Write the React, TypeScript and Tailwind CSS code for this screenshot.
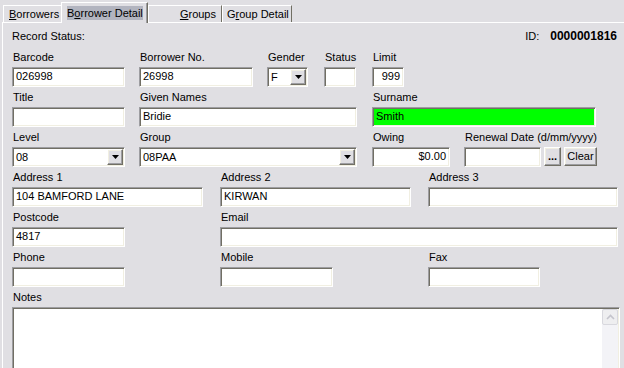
import { ReactNode } from "react";

const sunken =
  "border border-t-[#9d9da1] border-l-[#9d9da1] border-b-white border-r-white shadow-[inset_1px_1px_0_#716f64,inset_-1px_-1px_0_#f1efe2]";
const raised =
  "border border-t-white border-l-white border-b-[#716f64] border-r-[#716f64] shadow-[inset_-1px_-1px_0_#9d9da1,inset_1px_1px_0_#f1efe2]";

const Field = ({ label, className = "", children }: { label: string; className?: string; children: ReactNode }) => (
  <div className={className}>
    <div className="mb-[3px] h-[13px] whitespace-nowrap pl-[1px] leading-[13px]">{label}</div>
    {children}
  </div>
);

const TextBox = ({ value = "", className = "" }: { value?: string; className?: string }) => (
  <div className={`h-[20px] overflow-hidden whitespace-nowrap px-[3px] leading-[17px] ${sunken} ${className || "bg-white"}`}>
    {value}
  </div>
);

const DropDown = ({ value }: { value: string }) => (
  <div className={`flex h-[20px] items-center bg-white pl-[3px] pr-[1px] ${sunken}`}>
    <span className="flex-1 leading-[17px]">{value}</span>
    <div className={`flex h-[16px] w-[16px] items-center justify-center bg-[#e0dfe3] ${raised}`}>
      <svg width="7" height="4" viewBox="0 0 7 4">
        <path d="M0 0h7L3.5 4z" fill="#000" />
      </svg>
    </div>
  </div>
);

const Button = ({ children, className = "" }: { children: ReactNode; className?: string }) => (
  <div className={`flex h-[19px] items-center justify-center bg-[#e0dfe3] leading-[13px] ${raised} ${className}`}>
    {children}
  </div>
);

export default function App() {
  return (
    <div className="h-[368px] w-[624px] overflow-hidden bg-[#e0dfe3] font-['Liberation_Sans',Arial,sans-serif] text-[11px] text-black">
      {/* tab strip */}
      <div className="flex h-[22px] items-end pl-[3px]">
        <div className="h-[17px] w-[58px] border-l border-t border-white pl-[5px] pt-[2px] leading-[13px]">
          <span className="underline">B</span>orrowers
        </div>
        <div className="relative z-10 -mb-px h-[21px] w-[87px] border-l border-r border-t border-white border-r-[#716f64] bg-[#e0dfe3] pl-[5px] pt-[2px] shadow-[inset_-1px_0_0_#9d9da1]">
          <span className="inline-block bg-[#b2b4bf] leading-[14px]">
            B<span className="underline">o</span>rrower Detail
          </span>
        </div>
        <div className="h-[17px] w-[74px] border-l border-r border-t border-white border-r-[#716f64] pr-[5px] pt-[2px] text-right leading-[13px]">
          <span className="underline">G</span>roups
        </div>
        <div className="h-[17px] w-[70px] border-l border-r border-t border-white border-r-[#716f64] pl-[4px] pt-[2px] leading-[13px]">
          G<span className="underline">r</span>oup Detail
        </div>
      </div>

      {/* panel */}
      <div className="ml-[2px] h-[346px] border-l border-t border-white pl-[9px] pt-[7px]">
        <div className="mb-[8px] flex h-[13px] items-center pr-[7px] leading-[13px]">
          <span>Record Status:</span>
          <span className="ml-auto">ID:</span>
          <span className="ml-[11px] text-[12px] font-bold">0000001816</span>
        </div>

        <div className="flex h-[40px]">
          <Field label="Barcode" className="w-[113px]">
            <TextBox value="026998" />
          </Field>
          <Field label="Borrower No." className="ml-[14px] w-[114px]">
            <TextBox value="26998" />
          </Field>
          <Field label="Gender" className="ml-[14px] w-[41px]">
            <DropDown value="F" />
          </Field>
          <Field label="Status" className="ml-[16px] w-[32px]">
            <TextBox />
          </Field>
          <Field label="Limit" className="ml-[16px] w-[32px]">
            <TextBox value="999" className="bg-white text-right" />
          </Field>
        </div>

        <div className="flex h-[40px]">
          <Field label="Title" className="w-[113px]">
            <TextBox />
          </Field>
          <Field label="Given Names" className="ml-[14px] w-[218px]">
            <TextBox value="Bridie" />
          </Field>
          <Field label="Surname" className="ml-[15px] w-[224px]">
            <TextBox value="Smith" className="bg-[#00ff00]" />
          </Field>
        </div>

        <div className="flex h-[40px]">
          <Field label="Level" className="w-[113px]">
            <DropDown value="08" />
          </Field>
          <Field label="Group" className="ml-[14px] w-[218px]">
            <DropDown value="08PAA" />
          </Field>
          <Field label="Owing" className="ml-[15px] w-[78px]">
            <TextBox value="$0.00" className="bg-white text-right" />
          </Field>
          <Field label="Renewal Date (d/mm/yyyy)" className="ml-[14px] w-[133px]">
            <div className="flex">
              <div className="w-[77px]">
                <TextBox />
              </div>
              <Button className="ml-[3px] w-[17px]">
                <span className="font-bold">...</span>
              </Button>
              <Button className="ml-[3px] w-[33px]">Clear</Button>
            </div>
          </Field>
        </div>

        <div className="flex h-[40px]">
          <Field label="Address 1" className="w-[191px]">
            <TextBox value="104 BAMFORD LANE" />
          </Field>
          <Field label="Address 2" className="ml-[17px] w-[191px]">
            <TextBox value="KIRWAN" />
          </Field>
          <Field label="Address 3" className="ml-[17px] w-[190px]">
            <TextBox />
          </Field>
        </div>

        <div className="flex h-[40px]">
          <Field label="Postcode" className="w-[113px]">
            <TextBox value="4817" />
          </Field>
          <Field label="Email" className="ml-[95px] w-[398px]">
            <TextBox />
          </Field>
        </div>

        <div className="flex h-[40px]">
          <Field label="Phone" className="w-[113px]">
            <TextBox />
          </Field>
          <Field label="Mobile" className="ml-[95px] w-[113px]">
            <TextBox />
          </Field>
          <Field label="Fax" className="ml-[95px] w-[112px]">
            <TextBox />
          </Field>
        </div>

        <Field label="Notes" className="w-[608px]">
          <div className={`flex h-[80px] justify-end bg-white pr-[1px] pt-[1px] ${sunken}`}>
            <div className="flex w-[16px] flex-col bg-[#f3f3f7]">
              <div className="flex h-[16px] items-center justify-center rounded-[2px] border border-[#d8d8de] bg-[#eeeef0]">
                <svg width="9" height="6" viewBox="0 0 9 6">
                  <path d="M1 5l3.5-3.5L8 5" fill="none" stroke="#c4c4cc" strokeWidth="1.6" />
                </svg>
              </div>
            </div>
          </div>
        </Field>
      </div>
    </div>
  );
}
